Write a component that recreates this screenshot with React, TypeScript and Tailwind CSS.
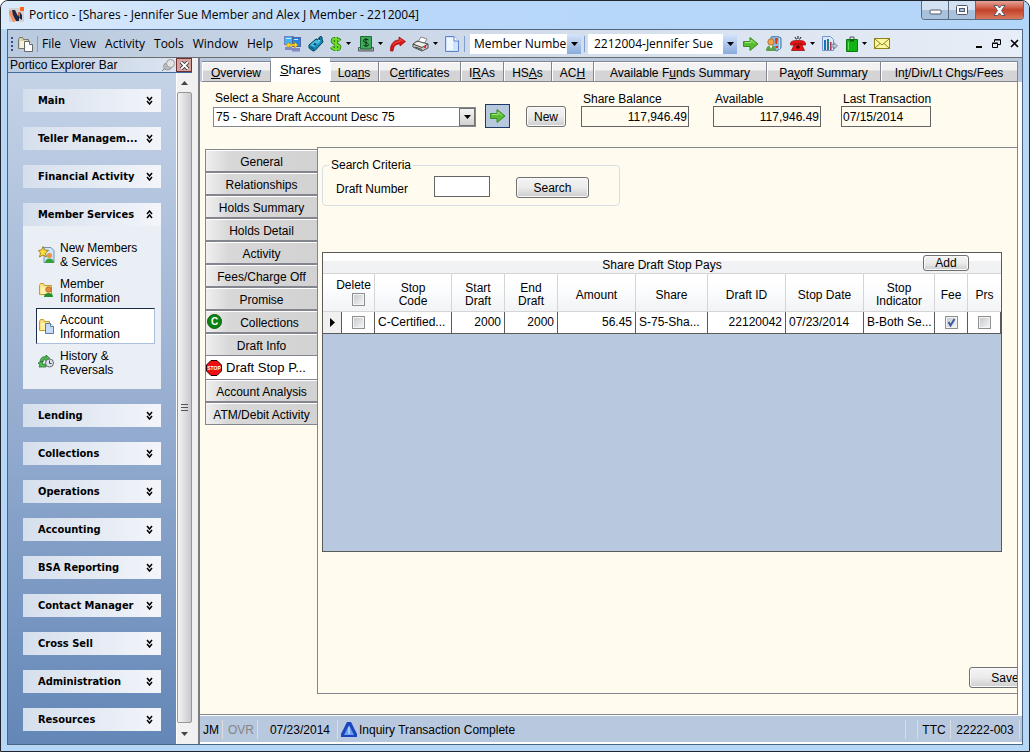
import { useState, type ReactNode } from 'react';
import clsx from 'clsx';

const tabs = [
    { before: '', key: 'O', after: 'verview', width: 'w-[69px]' },
    { before: '', key: 'S', after: 'hares', width: 'w-[59px]' },
    { before: 'Loa', key: 'n', after: 's', width: 'w-[49px]' },
    { before: 'C', key: 'e', after: 'rtificates', width: 'w-[82px]' },
    { before: 'I', key: 'R', after: 'As', width: 'w-[43px]' },
    { before: 'HS', key: 'A', after: 's', width: 'w-[48px]' },
    { before: 'AC', key: 'H', after: '', width: 'w-[42px]' },
    { before: 'Available F', key: 'u', after: 'nds Summary', width: 'w-[173px]' },
    { before: 'Pa', key: 'y', after: 'off Summary', width: 'w-[114px]' },
    { before: 'In', key: 't', after: '/Div/Lt Chgs/Fees', width: 'flex-1' },
];

const sideTabs = [
    'General',
    'Relationships',
    'Holds Summary',
    'Holds Detail',
    'Activity',
    'Fees/Charge Off',
    'Promise',
    'Collections',
    'Draft Info',
    'Draft Stop P...',
    'Account Analysis',
    'ATM/Debit Activity',
];

const groups = [
    'Main',
    'Teller Managem...',
    'Financial Activity',
    'Member Services',
    'Lending',
    'Collections',
    'Operations',
    'Accounting',
    'BSA Reporting',
    'Contact Manager',
    'Cross Sell',
    'Administration',
    'Resources',
];

const columns = ['Stop\nCode', 'Start\nDraft', 'End\nDraft', 'Amount', 'Share', 'Draft ID', 'Stop Date', 'Stop\nIndicator', 'Fee', 'Prs'];

function Svg({ w = 16, h = 16, children }: { w?: number; h?: number; children: ReactNode }) {
    return (
        <svg width={w} height={h} viewBox={`0 0 ${w} ${h}`} className="block shrink-0" aria-hidden="true">
            {children}
        </svg>
    );
}

function Caret() {
    return (
        <Svg w={7} h={4}>
            <path d="M0 0h7L3.500 4z" fill="#000" />
        </Svg>
    );
}

function PorticoLogo() {
    return (
        <Svg>
            <rect y="1" width="15" height="14" fill="#d5d1d2" />
            <path d="M0 3l3 1 3 5v6H4L0 7z" fill="#f0926a" />
            <path d="M3 3h3l3 6V5h2l2 3v5l-3-2v3H7L4 8z" fill="#1d2748" />
            <path d="M9 5h2v6L9 8z" fill="#e8662c" />
            <rect x="11" width="4" height="4" fill="#ff6418" />
        </Svg>
    );
}

function FolderPageIcon({ gray = false }: { gray?: boolean }) {
    return (
        <Svg>
            <path d="M1.500 3.500l1-2h3l1 2h5v9h-10z" fill={gray ? '#d9d6ae' : '#f7df80'} stroke={gray ? '#77766a' : '#c79a2a'} />
            <path d="M3 5h8v7H3z" fill={gray ? '#f4f3df' : '#fff0ac'} />
            <path d="M7.500 5.500h5l3 3v7h-8z" fill={gray ? '#fff' : '#c3dcfb'} stroke={gray ? '#666' : '#60789c'} />
            <path d="M12.500 5.500v3h3" fill="#fff" stroke={gray ? '#666' : '#60789c'} />
        </Svg>
    );
}

function ComputersIcon() {
    return (
        <Svg w={17}>
            <rect x=".500" y=".500" width="9" height="8" fill="#3fb4f5" stroke="#7483c0" />
            <rect x="8.500" y="1.500" width="8" height="9" fill="#1f86e6" stroke="#56639f" />
            <path d="M2 2.500h5M10 3.500h4" stroke="#b8edff" />
            <path d="M1 11h7v3H1zM8 12h8v3.500H8z" fill="#8189c4" />
            <path d="M2 9l3.500-3v2h5V6L14 9l-3.500 3v-2h-5v2z" fill="#ffd52b" stroke="#a77c05" strokeWidth=".5" />
        </Svg>
    );
}

function DeviceIcon() {
    return (
        <Svg>
            <path d="M1 9l7-6 2 .500L12 .500l2 .500v2l1 3-8 8.500-2 .500L1 12z" fill="#138cb8" stroke="#0a3c56" />
            <path d="M2 9l6-5 4 2-6 5z" fill="#45bfe4" />
            <path d="M2 10l4 2v2l-3-2z" fill="#0a5c80" />
            <path d="M5 8.500l2-1.500 2 1-2 1.500z" fill="#0b3d57" />
            <path d="M11 2l1 1-1 2" stroke="#0a3c56" fill="none" />
            <path d="M10 4l2 1" stroke="#bdf6ff" />
        </Svg>
    );
}

function DollarIcon() {
    return (
        <Svg w={12}>
            <path d="M10 5C8 2 2.500 2 2.500 5s7 3 7 6-6 3-8 0M6 1v14" fill="none" stroke="#2b7d10" strokeWidth="3.600" />
            <path d="M10 5C8 2 2.500 2 2.500 5s7 3 7 6-6 3-8 0M6 1v14" fill="none" stroke="#6ddb2c" strokeWidth="2" />
        </Svg>
    );
}

function BillIcon() {
    return (
        <Svg>
            <path d="M.500 11.500h15V15H.500z" fill="#a8abb0" stroke="#55585e" />
            <path d="M2.500 .500h11V13h-11z" fill="#3eac58" stroke="#1b6b34" />
            <path d="M10.500 4C8.500 2.500 5.500 3 5.500 5s5 1.500 5 3.500S7 10.500 5.500 9M8 2v9" fill="none" stroke="#0a2f14" />
        </Svg>
    );
}

function RedoIcon() {
    return (
        <Svg>
            <path d="M.500 15C0 8 4 4 9 4V1l6.500 4.500L10 10V8c-5 0-6 2-7 7z" fill="#d81616" stroke="#9d0606" strokeWidth=".7" />
            <path d="M3 9c1-2 4-3.500 7-3.500V3l3 2.500" fill="none" stroke="#f0574c" />
        </Svg>
    );
}

function PrinterIcon() {
    return (
        <Svg w={17}>
            <path d="M6 6l3-5 6 2-3 5z" fill="#fff" stroke="#888" />
            <path d="M1 8l4-3 11 3v4l-6 3-9-4z" fill="#c9c9c7" stroke="#4c4c4c" />
            <path d="M2 8l8 3 5-2.500L6 6z" fill="#efefed" />
            <path d="M1 8l9 3.500L16 8M3 11l7 2.500" fill="none" stroke="#444" />
            <rect x="12" y="10" width="2" height="2" fill="#d33" />
        </Svg>
    );
}

function PageIcon() {
    return (
        <Svg w={14}>
            <path d="M.500 .500h8.500l4.500 4.500v10.500H.500z" fill="#cfe2ff" stroke="#5d84c9" />
            <path d="M2 2h6v12H2z" fill="#eef6ff" />
            <path d="M9 .500V5h4.500" fill="#fff" stroke="#5d84c9" />
        </Svg>
    );
}

function GreenArrow() {
    return (
        <Svg>
            <path d="M.500 5.500H7V1.500L15 8l-8 6.500v-4H.500z" fill="#55bd2e" stroke="#3a8c24" />
            <path d="M2 6.500h6V4l4 3.500" fill="none" stroke="#a5e584" />
        </Svg>
    );
}

function PersonAlertIcon() {
    return (
        <Svg>
            <path d="M5 1l6-1 4 2v10l-4 3-6-2z" fill="#8fbbe0" stroke="#4d7ba9" />
            <path d="M13.500 2v11" stroke="#cfe3f5" />
            <path d="M9 2h3l-1 6H9.500zM9.500 10H12v2H9.500z" fill="#d83818" />
            <circle cx="5" cy="6" r="3.200" fill="#f1a34b" stroke="#9b6224" strokeWidth=".7" />
            <path d="M0 15c0-4 2-5.500 5-5.500s5 1.500 5 5.500z" fill="#5da04a" />
            <path d="M3.500 9.500h3L5 13z" fill="#fff" />
        </Svg>
    );
}

function PhoneIcon() {
    return (
        <Svg>
            <path d="M.500 8c0-3 3-3.500 7.500-3.500s7.500.500 7.500 3.500v1h-4V7.500h-7V9h-4z" fill="#ee1313" stroke="#830805" strokeWidth=".7" />
            <path d="M4.500 8h7l3 6.500h-13z" fill="#ee1313" stroke="#830805" strokeWidth=".7" />
            <circle cx="8" cy="11" r="1.800" fill="#5b0303" />
            <path d="M5 1l1.500 2.500M8 0v3M11 1L9.500 3.500" stroke="#111" />
        </Svg>
    );
}

function ChartIcon() {
    return (
        <Svg>
            <path d="M.500 .500h8l3 3v11H.500z" fill="#dbe7fb" stroke="#7794cd" />
            <path d="M2 4h2v10H2z" fill="#1973bd" />
            <path d="M5 3h2v11H5z" fill="#17837d" />
            <path d="M8 6h1.500v8H8z" fill="#bd2450" />
            <path d="M9 8.500h3V6.500l3.500 3.500L12 13v-2H9z" fill="#b9c3d5" stroke="#67758b" strokeWidth=".7" />
        </Svg>
    );
}

function BagIcon() {
    return (
        <Svg w={12}>
            <path d="M4 4V1h4v3" fill="none" stroke="#555" />
            <path d="M.500 3.500h11v12H.500z" fill="#12b316" stroke="#0a7a0d" />
            <path d="M2.500 6v8" stroke="#62e05a" />
            <path d="M4 4.500h4" stroke="#0a5c0c" strokeWidth="2" />
        </Svg>
    );
}

function MailIcon() {
    return (
        <Svg w={16} h={11}>
            <rect x=".500" y=".500" width="15" height="10" fill="#fbf7a2" stroke="#8e8318" />
            <path d="M1 1l7 6 7-6M1 10l5-4.500M15 10l-5-4.500" fill="none" stroke="#8e8318" />
        </Svg>
    );
}

function NewMembersIcon() {
    return (
        <Svg w={17} h={17}>
            <path d="M6 1.500h7l3 3v12H6z" fill="#cfe4fa" stroke="#7b92ab" />
            <path d="M5 .500l1.500 3.500 4 .500-3 2.500 1 4L5 9l-3.500 2 1-4-2-2.500 3-.500z" fill="#ffda3b" stroke="#92700c" strokeWidth=".8" />
            <circle cx="11.500" cy="9.500" r="2.500" fill="#ec9340" />
            <path d="M7 17c0-3 2-4.500 4.500-4.500S16 14 16 17z" fill="#36a23a" />
        </Svg>
    );
}

function MemberIcon() {
    return (
        <Svg>
            <path d="M1.500 3.500l1-2h3l1 2h7v9h-12z" fill="#fbe487" stroke="#c79a2a" />
            <path d="M3 5h9v7H3z" fill="#fff0ac" />
            <circle cx="10.500" cy="7.500" r="2.800" fill="#e88b3a" stroke="#8b501c" strokeWidth=".6" />
            <path d="M6 15c0-3 2-4 4.500-4s4.500 1 4.500 4z" fill="#26902d" />
        </Svg>
    );
}

function HistoryIcon() {
    return (
        <Svg>
            <path d="M2 8c0-4 3-6 6-5V1l4 3.500L8 8V6C6 5.500 5 6 5 8z" fill="#4cb850" stroke="#176722" strokeWidth=".7" />
            <path d="M0 9l5-2-1 3h4v3H1l1-2z" fill="#52bf54" stroke="#176722" strokeWidth=".7" />
            <circle cx="11.500" cy="9" r="4" fill="#dce3ea" stroke="#646b74" />
            <path d="M11.500 6.500v3h2" fill="none" stroke="#3c4650" />
        </Svg>
    );
}

function StopIcon() {
    return (
        <Svg>
            <path d="M5 .500h6L15.500 5v6L11 15.500H5L.500 11V5z" fill="#f00f0f" stroke="#2a0000" />
            <text x="8" y="10" fontSize="5" fontWeight="bold" textAnchor="middle" fill="#fff">STOP</text>
        </Svg>
    );
}

function CollectionsIcon() {
    return (
        <Svg w={15} h={15}>
            <circle cx="7.500" cy="7.500" r="7" fill="#0a8212" stroke="#07600c" />
            <text x="7.500" y="11" fontSize="10" fontWeight="bold" textAnchor="middle" fill="#fff">C</text>
        </Svg>
    );
}

function InfoIcon() {
    return (
        <Svg>
            <path d="M6 0h4l6 12v3H0v-3z" fill="#1b45bf" />
            <path d="M8 3l5 10H3z" fill="#6d9df0" />
            <path d="M7.500 5h1v7h-1z" fill="#e8f2ff" />
        </Svg>
    );
}

function Chevrons({ up = false }: { up?: boolean }) {
    return (
        <Svg w={7} h={9}>
            <path
                d={up ? 'M1 4l2.500-3L6 4M1 8l2.500-3L6 8' : 'M1 1l2.500 3L6 1M1 5l2.500 3L6 5'}
                fill="none"
                stroke="#000"
                strokeWidth="1.500"
            />
        </Svg>
    );
}

function Checkbox({ label, defaultChecked = false }: { label: string; defaultChecked?: boolean }) {
    return (
        <span className="relative inline-block size-[13px] align-middle">
            <input
                type="checkbox"
                aria-label={label}
                defaultChecked={defaultChecked}
                className="peer block size-[13px] appearance-none border border-[#8e8f8f] bg-linear-to-br from-[#c3c7cc] to-[#f7f7f7] shadow-[inset_0_0_0_1px_#f4f4f4]"
            />
            <svg viewBox="0 0 13 13" className="pointer-events-none absolute inset-0 hidden peer-checked:block">
                <path d="M3.500 6l2 3.500L9.500 3" fill="none" stroke="#3c5a9e" strokeWidth="2" />
            </svg>
        </span>
    );
}

function Button({ className, children }: { className?: string; children: ReactNode }) {
    return (
        <button
            type="button"
            className={clsx(
                'rounded-[3px] border border-[#707070] bg-linear-to-b from-[#f4f4f4] from-0% via-[#ebebeb] via-50% to-[#cdcdcd] text-center shadow-[inset_0_0_0_1px_#fafafa]',
                className
            )}
        >
            {children}
        </button>
    );
}

function ToolButton({ label, caret = false, children }: { label: string; caret?: boolean; children: ReactNode }) {
    return (
        <button type="button" aria-label={label} className="flex items-center gap-1">
            {children}
            {caret && (
                <Svg w={5} h={3}>
                    <path d="M0 0h5L2.500 3z" />
                </Svg>
            )}
        </button>
    );
}

function ToolSelect({ label, value, className }: { label: string; value: string; className: string }) {
    return (
        <div className={clsx('relative h-5 shrink-0 bg-white', className)}>
            <select aria-label={label} className="h-full w-full appearance-none overflow-hidden bg-transparent pr-[14px] pl-[2px]">
                <option>{value}</option>
            </select>
            <span className="pointer-events-none absolute inset-y-0 right-0 flex w-[14px] items-center justify-center bg-linear-to-b from-[#d6e5fb] to-[#89abdc]">
                <Caret />
            </span>
        </div>
    );
}

function TitleBar() {
    return (
        <header className="flex h-7 shrink-0 items-start justify-between bg-linear-to-r from-[#dcebfb] via-[#b9d8f9] via-40% to-[#b3d5f8] pl-2">
            <div className="flex h-7 items-center gap-1 font-['Open_Sans','Noto_Sans',sans-serif] text-[12px]">
                <PorticoLogo />
                <h1>Portico - [Shares - Jennifer Sue Member and Alex J Member - 2212004]</h1>
            </div>
            <div className="mr-[5px] flex h-[19px] overflow-hidden rounded-b-[4px] border border-t-0 border-[#5b6b80]">
                <button type="button" aria-label="Minimize" className="flex w-[27px] items-center justify-center border-r border-[#5b6b80] bg-linear-to-b from-[#d3e2f2] from-50% to-[#a8c1dc] to-50%">
                    <Svg w={13} h={10}>
                        <rect x="1" y="5" width="11" height="4" rx="1" fill="#fff" stroke="#545868" />
                    </Svg>
                </button>
                <button type="button" aria-label="Maximize" className="flex w-[27px] items-center justify-center border-r border-[#5b6b80] bg-linear-to-b from-[#d3e2f2] from-50% to-[#a8c1dc] to-50%">
                    <Svg w={12} h={10}>
                        <rect x=".500" y=".500" width="11" height="9" rx="1" fill="#fff" stroke="#545868" />
                        <rect x="3.500" y="3.500" width="5" height="3" fill="#a8c1dc" stroke="#545868" />
                    </Svg>
                </button>
                <button type="button" aria-label="Close" className="flex w-[47px] items-center justify-center bg-linear-to-b from-[#e4a498] via-[#c4402a] via-50% to-[#d9785c]">
                    <Svg w={13} h={11}>
                        <path d="M1 .500h3.500l2 2.500 2-2.500H12L8.500 5.500 12 10.500H8.500l-2-2.500-2 2.500H1l3.500-5z" fill="#fff" stroke="#545868" />
                    </Svg>
                </button>
            </div>
        </header>
    );
}

function Toolbar() {
    return (
        <div className="flex h-7 shrink-0 items-center border-b border-[#6c6c6c] bg-linear-to-r from-[#bacade] to-[#e8eef7] px-[3px] font-['Open_Sans','Noto_Sans',sans-serif] text-[12px]">
            <Svg w={3} h={16}>
                <path d="M0 1h2v2H0zM0 5h2v2H0zM0 9h2v2H0zM0 13h2v2H0z" fill="#2c4f8e" />
            </Svg>
            <span className="ml-[3px]">
                <FolderPageIcon gray />
            </span>
            <span className="ml-1 h-4 w-px bg-[#7f9fd2]" />
            <nav className="ml-[3px] flex w-[233px] justify-between">
                {['File', 'View', 'Activity', 'Tools', 'Window', 'Help'].map((item) => (
                    <button key={item} type="button" className="px-px">{item}</button>
                ))}
            </nav>
            <div className="ml-[10px] flex w-[175px] items-center justify-between">
                <ToolButton label="Network"><ComputersIcon /></ToolButton>
                <ToolButton label="Device"><DeviceIcon /></ToolButton>
                <ToolButton label="Funds" caret><DollarIcon /></ToolButton>
                <ToolButton label="Cash" caret><BillIcon /></ToolButton>
                <ToolButton label="Forward"><RedoIcon /></ToolButton>
                <ToolButton label="Print" caret><PrinterIcon /></ToolButton>
                <ToolButton label="New page"><PageIcon /></ToolButton>
            </div>
            <span className="mx-[5px] h-4 w-px bg-[#7f9fd2]" />
            <ToolSelect label="Search type" value="Member Number" className="w-[111px] pl-[2px]" />
            <span className="mx-[3px] h-4 w-px bg-[#7f9fd2]" />
            <ToolSelect label="Member" value="2212004-Jennifer Sue" className="w-[149px] pl-1" />
            <div className="ml-[6px] flex w-[147px] items-center justify-between">
                <ToolButton label="Go"><GreenArrow /></ToolButton>
                <ToolButton label="Member alerts"><PersonAlertIcon /></ToolButton>
                <ToolButton label="Call" caret><PhoneIcon /></ToolButton>
                <ToolButton label="Report"><ChartIcon /></ToolButton>
                <ToolButton label="Bag" caret><BagIcon /></ToolButton>
                <ToolButton label="Mail"><MailIcon /></ToolButton>
            </div>
            <div className="ml-auto flex items-center gap-[9px]">
                <button type="button" aria-label="Minimize page">
                    <Svg w={7} h={9}><path d="M0 7h6v2H0z" /></Svg>
                </button>
                <button type="button" aria-label="Restore page">
                    <Svg w={9} h={9}>
                        <path d="M2.500 3V1h6v4.500H6M2.500.500h6M.500 4.500h5v4h-5zM0 4h6" fill="none" stroke="#000" />
                    </Svg>
                </button>
                <button type="button" aria-label="Close page">
                    <Svg w={9} h={9}><path d="M1 1l7 7M8 1L1 8" stroke="#000" strokeWidth="1.600" /></Svg>
                </button>
            </div>
        </div>
    );
}

function ServiceItem({ icon, lines, selected = false }: { icon: ReactNode; lines: [string, string]; selected?: boolean }) {
    return (
        <li>
            <a
                href="#"
                className={clsx(
                    'flex h-9 items-center gap-[5px] border pl-px leading-[14px]',
                    selected ? 'border-[#a9bfdd] border-t-[#1c2c4c] border-l-[#1c2c4c] bg-white' : 'border-transparent'
                )}
            >
                <span className="w-[17px]">{icon}</span>
                <span className="pt-[2px]">
                    {lines[0]}
                    <br />
                    {lines[1]}
                </span>
            </a>
        </li>
    );
}

function ExplorerBar() {
    return (
        <aside className="flex w-[184px] shrink-0 flex-col">
            <div className="flex h-[15px] shrink-0 items-center border-b border-[#44699c] bg-linear-to-r from-[#bccbe1] to-[#dfe7f2] pl-[2px]">
                <h2 className="flex-1">Portico Explorer Bar</h2>
                <button type="button" aria-label="Pin">
                    <Svg w={15} h={13}>
                        <path d="M1 12l5-5" stroke="#777" />
                        <ellipse cx="6.500" cy="7.500" rx="4" ry="3.500" fill="#bbb" stroke="#999" />
                        <circle cx="9.500" cy="4.500" r="4" fill="#e4e4e4" stroke="#9a9a9a" />
                    </Svg>
                </button>
                <button type="button" aria-label="Close explorer" className="flex h-[14px] w-4 items-center justify-center border border-[#6b3136] bg-[#d9a29e]">
                    <Svg w={11} h={9}>
                        <path d="M2 1l7 7M9 1L2 8" stroke="#333" strokeWidth="3.600" />
                        <path d="M2 1l7 7M9 1L2 8" stroke="#fff" strokeWidth="1.800" />
                    </Svg>
                </button>
            </div>
            <div className="flex min-h-0 flex-1">
                <div className="flex flex-1 flex-col gap-[15px] overflow-hidden bg-linear-to-b from-[#c5d3e7] via-[#92aace] via-55% to-[#6387b7] px-[15px] pt-4">
                    {groups.map((name) => (
                        <section key={name}>
                            <button
                                type="button"
                                className="flex h-[23px] w-full items-center justify-between bg-linear-to-r from-[#d5dfec] to-[#f3f5fa] pr-2 pl-[15px] font-['DejaVu_Sans_Condensed','DejaVu_Sans',sans-serif] text-[11px] font-bold"
                            >
                                {name}
                                <Chevrons up={name === 'Member Services'} />
                            </button>
                            {name === 'Member Services' && (
                                <ul className="h-[163px] bg-[#e9eff5] px-[6px] pt-[10px] pl-[13px]">
                                    <ServiceItem icon={<NewMembersIcon />} lines={['New Members', '& Services']} />
                                    <ServiceItem icon={<MemberIcon />} lines={['Member', 'Information']} />
                                    <ServiceItem icon={<FolderPageIcon />} lines={['Account', 'Information']} selected />
                                    <ServiceItem icon={<HistoryIcon />} lines={['History &', 'Reversals']} />
                                </ul>
                            )}
                        </section>
                    ))}
                </div>
                <div className="flex w-4 shrink-0 flex-col border-l border-white bg-[#f1f1f1]">
                    <span className="flex h-[19px] items-center justify-center">
                        <Svg w={7} h={4}><path d="M0 4h7L3.500 0z" fill="#444" /></Svg>
                    </span>
                    <span className="flex flex-1 items-center justify-center rounded-[2px] border border-[#979797] bg-linear-to-r from-[#f4f4f4] to-[#c9c9ce]">
                        <Svg w={7} h={8}><path d="M0 .500h7M0 3.500h7M0 6.500h7" stroke="#555" /></Svg>
                    </span>
                    <span className="flex h-[21px] items-center justify-center">
                        <Svg w={7} h={4}><path d="M0 0h7L3.500 4z" fill="#444" /></Svg>
                    </span>
                </div>
            </div>
        </aside>
    );
}

function ReadOnlyField({ id, label, value, className, right = false }: { id: string; label: string; value: string; className: string; right?: boolean }) {
    return (
        <div className={clsx('flex shrink-0 flex-col', className)}>
            <label htmlFor={id} className="h-[14px] pl-[2px] leading-[14px] whitespace-nowrap">{label}</label>
            <input
                id={id}
                readOnly
                value={value}
                className={clsx('h-[21px] w-full border border-[#646464] bg-transparent px-px', right && 'text-right')}
            />
        </div>
    );
}

function AccountHeader() {
    return (
        <div className="flex h-[65px] shrink-0 items-start pt-[10px] pl-[13px]">
            <div className="w-[263px] shrink-0">
                <label htmlFor="account" className="block h-[15px] pl-[2px] leading-3">Select a Share Account</label>
                <div className="relative h-5 border border-[#828790] bg-white">
                    <select id="account" className="h-full w-full appearance-none pr-5 pl-[2px]">
                        <option>75 - Share Draft Account Desc 75</option>
                    </select>
                    <span className="pointer-events-none absolute inset-y-0 right-0 flex w-4 items-center justify-center border border-[#707070] bg-linear-to-b from-[#f4f4f4] to-[#d2d2d2]">
                        <Caret />
                    </span>
                </div>
            </div>
            <button type="button" aria-label="Go to account" className="mt-3 ml-[9px] flex h-6 w-[25px] items-center justify-center border border-[#1f3a66] bg-[#b8c8de]">
                <GreenArrow />
            </button>
            <Button className="mt-[14px] ml-4 h-[21px] w-10 pt-px">New</Button>
            <ReadOnlyField id="balance" label="Share Balance" value="117,946.49" className="ml-[15px] w-[108px]" right />
            <ReadOnlyField id="available" label="Available" value="117,946.49" className="ml-6 w-[108px]" right />
            <ReadOnlyField id="last" label="Last Transaction" value="07/15/2014" className="ml-5 w-[90px]" />
        </div>
    );
}

function SideTabs() {
    return (
        <nav className="mt-[2px] flex w-28 shrink-0 flex-col">
            {sideTabs.map((name) => {
                const isActive = name === 'Draft Stop P...';
                return (
                    <button
                        key={name}
                        type="button"
                        className={clsx(
                            'flex h-[23px] items-center text-center',
                            isActive
                                ? 'gap-1 border-l border-[#83858f] bg-white text-[13px]'
                                : 'border border-r-0 border-[#83858f] bg-linear-to-r from-[#f0f0f0] via-[#d8d8d8] via-20% to-[#d2d2d2] shadow-[inset_0_1px_0_#fff]'
                        )}
                    >
                        {isActive && <StopIcon />}
                        {name === 'Collections' && <span className="ml-px"><CollectionsIcon /></span>}
                        <span className={clsx('whitespace-nowrap', !isActive && 'flex-1 pt-[2px]')}>{name}</span>
                    </button>
                );
            })}
        </nav>
    );
}

function StopPaysGrid() {
    return (
        <div className="mr-[15px] ml-1 h-[300px] shrink-0 border border-[#5a5a5a] bg-[#b8c8de]">
            <div className="grid h-[21px] grid-cols-[1fr_auto_1fr] items-center border-b border-[#d5d5d5] bg-linear-to-b from-white from-40% to-[#f1f2f4] to-40%">
                <span />
                <h3 className="pt-[3px]">Share Draft Stop Pays</h3>
                <Button className="mr-8 h-4 w-[46px] justify-self-end leading-[14px]">Add</Button>
            </div>
            <table className="w-full table-fixed border-separate border-spacing-0 leading-[13px]">
                <colgroup>
                    <col className="w-[19px]" />
                    <col className="w-[33px]" />
                    <col className="w-[77px]" />
                    <col className="w-[53px]" />
                    <col className="w-[53px]" />
                    <col className="w-[78px]" />
                    <col className="w-[72px]" />
                    <col className="w-[78px]" />
                    <col className="w-[78px]" />
                    <col className="w-[71px]" />
                    <col className="w-[33px]" />
                    <col className="w-[33px]" />
                </colgroup>
                <thead>
                    <tr className="h-[38px] bg-linear-to-b from-white from-25% to-[#f1f3f6] to-100%">
                        <th colSpan={2} className="border-r border-b border-[#d5d5d5] p-0 pl-[10px] font-normal">
                            Delete
                            <span className="block pl-[10px] leading-[13px]"><Checkbox label="Delete all" /></span>
                        </th>
                        {columns.map((name) => (
                            <th key={name} className="border-r border-b border-[#d5d5d5] p-0 pt-[5px] font-normal whitespace-pre-line last:border-r-0">
                                {name}
                            </th>
                        ))}
                    </tr>
                </thead>
                <tbody>
                    <tr className="h-[22px] bg-white *:border-r *:border-b *:border-[#5a5a5a] *:px-[3px] *:py-0 *:whitespace-nowrap">
                        <td className="bg-[#f0f0f0]">
                            <span className="flex justify-center">
                                <Svg w={5} h={9}><path d="M0 0l5 4.500L0 9z" /></Svg>
                            </span>
                        </td>
                        <td className="text-center"><Checkbox label="Delete" /></td>
                        <td>C-Certified...</td>
                        <td className="text-right">2000</td>
                        <td className="text-right">2000</td>
                        <td className="text-right">56.45</td>
                        <td>S-75-Sha...</td>
                        <td className="text-right">22120042</td>
                        <td>07/23/2014</td>
                        <td>B-Both Se...</td>
                        <td className="text-center"><Checkbox label="Fee" defaultChecked /></td>
                        <td className="text-center"><Checkbox label="Prs" /></td>
                    </tr>
                </tbody>
            </table>
        </div>
    );
}

function StopPaysPanel() {
    const [draft, setDraft] = useState('');

    return (
        <section className="flex flex-1 flex-col overflow-hidden border-t border-l border-[#83858f]">
            <fieldset className="mt-[9px] ml-1 h-[49px] w-[298px] shrink-0 rounded-[4px] border border-[#d5dfe5] px-[13px]">
                <legend className="-ml-[7px] px-[2px] leading-4">Search Criteria</legend>
                <div className="flex items-center pt-[2px]">
                    <label htmlFor="draft" className="w-[98px] pt-1">Draft Number</label>
                    <input
                        id="draft"
                        value={draft}
                        onChange={(e) => setDraft(e.target.value)}
                        className="h-[21px] w-14 border border-[#646464] bg-white px-1"
                    />
                    <Button className="mt-[2px] ml-[26px] h-[21px] w-[73px] pt-px">Search</Button>
                </div>
            </fieldset>
            <div className="h-[46px] shrink-0" />
            <StopPaysGrid />
            <div className="mt-auto mb-[5px] flex justify-end">
                <Button className="-mr-6 h-[21px] w-[72px] shrink-0 pt-px">Save</Button>
            </div>
        </section>
    );
}

function StatusBar() {
    return (
        <footer className="mb-[2px] flex h-[26px] shrink-0 items-center bg-[#b8c8de] py-[3px] pt-1 *:flex *:h-full *:items-center *:border-r *:border-[#dcdcdc]">
            <span className="w-[23px] pl-[3px]">JM</span>
            <span className="w-[35px] pl-[5px] text-[#868686]">OVR</span>
            <span className="w-20 justify-end pr-[7px]">07/23/2014</span>
            <span className="flex-1 gap-[2px] pl-[3px]"><InfoIcon />Inquiry Transaction Complete</span>
            <span className="w-3" />
            <span className="w-[33px] justify-center">TTC</span>
            <span className="mr-[2px] w-[69px] justify-center">22222-003</span>
        </footer>
    );
}

export default function App() {
    const [activeTab, setActiveTab] = useState('hares');

    return (
        <div className="flex h-screen w-full flex-col overflow-hidden rounded-t-lg border border-[#20242c] bg-[#b7d7f9] font-['Liberation_Sans',Arial,sans-serif] text-[12px] leading-4 text-black">
            <TitleBar />
            <div className="mx-[6px] mb-[6px] flex min-h-0 flex-1 flex-col border border-[#4d6482] bg-white">
                <Toolbar />
                <div className="flex min-h-0 flex-1">
                    <ExplorerBar />
                    <div className="w-2 shrink-0 border-r-2 border-[#7c7c80] bg-[#f0f0f0]" />
                    <main className="flex min-w-0 flex-1 flex-col">
                        <div className="flex h-6 shrink-0 items-end bg-[#b8c8de] pr-1 pl-[2px]">
                            {tabs.map((tab) => {
                                const isActive = activeTab === tab.after;
                                return (
                                    <button
                                        key={tab.before + tab.key}
                                        type="button"
                                        onClick={() => setActiveTab(tab.after)}
                                        className={clsx(
                                            'border-[#83858f] text-center whitespace-nowrap',
                                            tab.width,
                                            isActive
                                                ? 'h-6 bg-white text-[13px]'
                                                : 'h-[21px] border-t border-r border-b bg-linear-to-b from-[#f2f2f2] from-40% to-[#d4d4d6] to-50% pt-[2px] shadow-[inset_1px_1px_0_#fff]'
                                        )}
                                    >
                                        {tab.before}
                                        <u>{tab.key}</u>
                                        {tab.after}
                                    </button>
                                );
                            })}
                        </div>
                        <div className="mr-1 mb-px flex min-h-0 flex-1 flex-col border-r border-b border-[#83858f] bg-[#fffbef]">
                            <AccountHeader />
                            <div className="flex min-h-0 flex-1 pl-[5px]">
                                <SideTabs />
                                <StopPaysPanel />
                            </div>
                            <div className="flex h-[21px] shrink-0">
                                <span className="w-[117px] shrink-0" />
                                <span className="flex-1 border-t border-[#83858f]" />
                            </div>
                        </div>
                        <StatusBar />
                    </main>
                </div>
            </div>
        </div>
    );
}
